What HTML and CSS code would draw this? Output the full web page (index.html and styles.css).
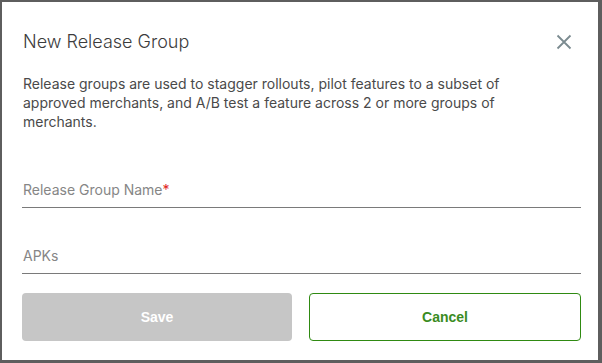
FILE: index.html
```html
<!DOCTYPE html>
<html lang="en">
<head>
    <meta charset="UTF-8">
    <meta name="viewport" content="width=device-width, initial-scale=1.0">
    <title>New Release Group</title>
    <link rel="stylesheet" href="styles.css">
</head>
<body>
    <div class="modal">
        <div class="modal-header">
            <h2 class="modal-title">New Release Group</h2>
            <button class="close" aria-label="Close">
                <svg width="16" height="16" viewBox="0 0 16 16">
                    <path d="M1.5 1.5 L14.5 14.5 M14.5 1.5 L1.5 14.5" stroke="#7b8b90" stroke-width="1.8" fill="none"/>
                </svg>
            </button>
        </div>
        <p class="desc">Release groups are used to stagger rollouts, pilot features to a subset of approved merchants, and A/B test a feature across 2 or more groups of merchants.</p>
        <div class="field first">
            <span class="label">Release Group Name<span class="req">*</span></span>
        </div>
        <div class="field">
            <span class="label">APKs</span>
        </div>
        <div class="actions">
            <button class="btn save" disabled>Save</button>
            <button class="btn cancel">Cancel</button>
        </div>
    </div>
</body>
</html>
```

FILE: styles.css
```css
body {
    margin: 0;
    background: #5e5e5e;
    font-family: Inter, Roboto, "Liberation Sans", sans-serif;
    overflow: hidden;
}
.modal {
    margin: 2px;
    width: 596px;
    height: 358px;
    box-sizing: border-box;
    background: #fff;
    padding: 28px 17px 0 20px;
}
.modal-header {
    display: flex;
    justify-content: space-between;
    align-items: center;
    padding-left: 1px;
}
.modal-title {
    margin: 0;
    font-size: 18px;
    line-height: 24px;
    font-weight: 300;
    color: #3c3c3c;
}
.close {
    border: none;
    background: none;
    padding: 0;
    margin-right: 9px;
    width: 16px;
    height: 16px;
    cursor: pointer;
}
.desc {
    margin: 20px 0 0;
    font-size: 14px;
    line-height: 19px;
    color: #4a4a4a;
    padding-left: 1px;
    padding-right: 20px;
}
.field {
    margin-top: 37px;
    padding: 0 0 7px 1px;
    border-bottom: 1px solid #7a7a7a;
}
.field.first {
    margin-top: 48px;
}
.label {
    font-size: 14px;
    line-height: 20px;
    color: #868686;
}
.req {
    color: #e0261d;
}
.actions {
    display: flex;
    gap: 17px;
    margin-top: 19px;
}
.btn {
    flex: 1;
    height: 48px;
    border-radius: 4px;
    font-family: "Liberation Sans", Arial, sans-serif;
    font-size: 14px;
    font-weight: bold;
    cursor: pointer;
}
.save {
    background: #c6c6c6;
    border: none;
    color: #fff;
}
.cancel {
    background: #fff;
    border: 1.5px solid #2f8a12;
    color: #3a8c1f;
}
```
